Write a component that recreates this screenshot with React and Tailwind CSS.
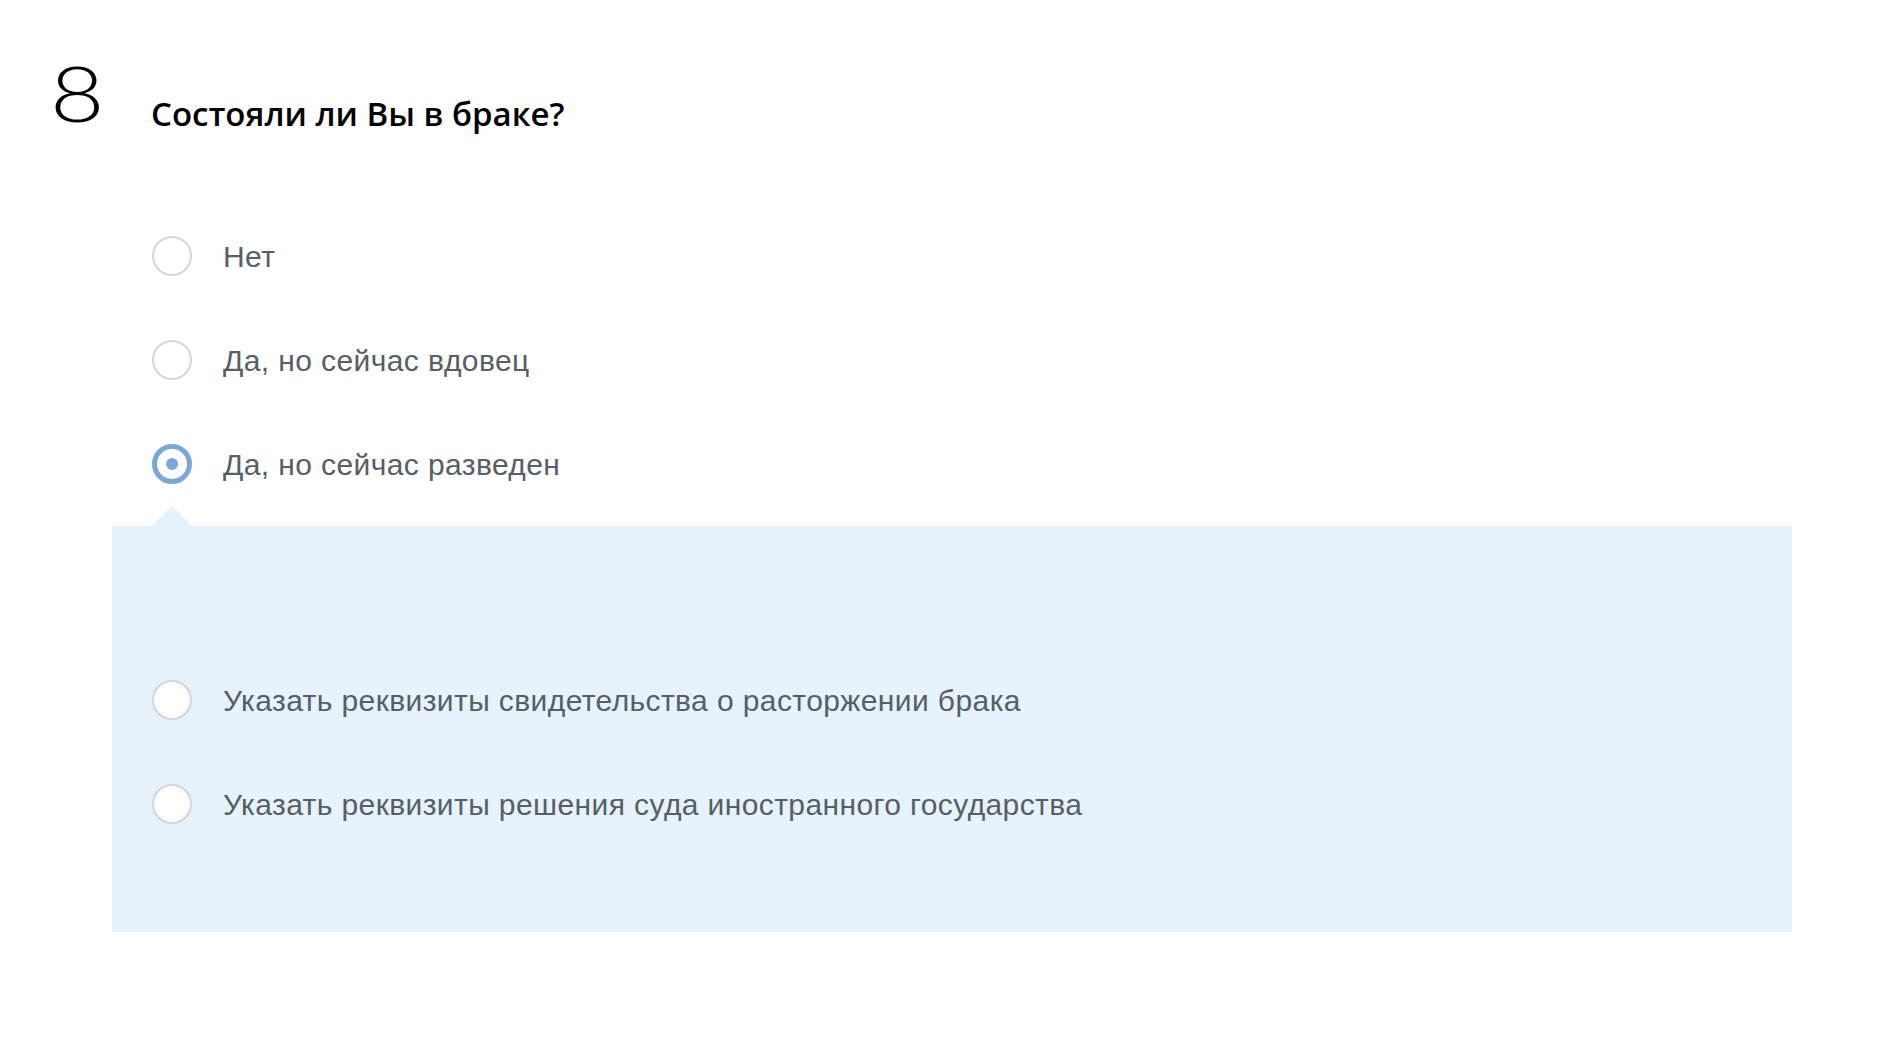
import { useState } from "react";

const mainOptions = [
    { id: "no", label: "Нет" },
    { id: "widow", label: "Да, но сейчас вдовец" },
    { id: "divorced", label: "Да, но сейчас разведен" },
];

const divorceOptions = [
    { id: "certificate", label: "Указать реквизиты свидетельства о расторжении брака" },
    { id: "court", label: "Указать реквизиты решения суда иностранного государства" },
];

const Radio = ({ checked, filled }) => {
    if (checked) {
        return (
            <span className="flex items-center justify-center w-10 h-10 shrink-0 rounded-full border-[5px] border-[#79a9d2]">
                <span className="w-3 h-3 rounded-full bg-[#79a9d2]" />
            </span>
        );
    }
    return (
        <span
            className={`w-10 h-10 shrink-0 rounded-full border-2 border-[#d4d7da] ${filled ? "bg-white" : "bg-transparent"}`}
        />
    );
};

const OptionRow = ({ label, checked, filled, onClick }) => (
    <button
        type="button"
        onClick={onClick}
        className="flex items-center h-[104px] gap-[31px] text-left cursor-pointer"
    >
        <Radio checked={checked} filled={filled} />
        <span className="text-[30px] tracking-[0.4px] text-[#575e66] font-['Liberation_Sans',Arial,sans-serif]">
            {label}
        </span>
    </button>
);

const App = () => {
    const [married, setMarried] = useState("divorced");
    const [divorceDoc, setDivorceDoc] = useState(null);

    return (
        <main className="min-h-screen w-full bg-white">
            {/* Question header */}
            <div className="flex items-start h-[204px] pl-[50px] pt-[54px]">
                <span className="w-[101px] inline-block origin-left scale-x-[1.22] text-[77px] leading-none font-light text-black font-['Lato',sans-serif]">
                    8
                </span>
                <h1 className="mt-[43px] text-[33px] leading-none font-semibold text-black font-['Open_Sans',sans-serif]">
                    Состояли ли Вы в браке?
                </h1>
            </div>

            {/* Answers */}
            <div className="flex flex-col pl-[152px]">
                {mainOptions.map((opt) => (
                    <OptionRow
                        key={opt.id}
                        label={opt.label}
                        checked={married === opt.id}
                        onClick={() => setMarried(opt.id)}
                    />
                ))}
            </div>

            {/* Nested choice panel */}
            {married === "divorced" && (
                <div className="relative mt-[10px] ml-[112px] w-[1680px] bg-[#e6f3fc] pl-[40px] pt-[122px] pb-[76px] flex flex-col">
                    <span className="absolute -top-[20px] left-[40px] w-0 h-0 border-l-[20px] border-r-[20px] border-b-[20px] border-l-transparent border-r-transparent border-b-[#e6f3fc]" />
                    {divorceOptions.map((opt) => (
                        <OptionRow
                            key={opt.id}
                            label={opt.label}
                            filled
                            checked={divorceDoc === opt.id}
                            onClick={() => setDivorceDoc(opt.id)}
                        />
                    ))}
                </div>
            )}
        </main>
    );
};

export default App;
